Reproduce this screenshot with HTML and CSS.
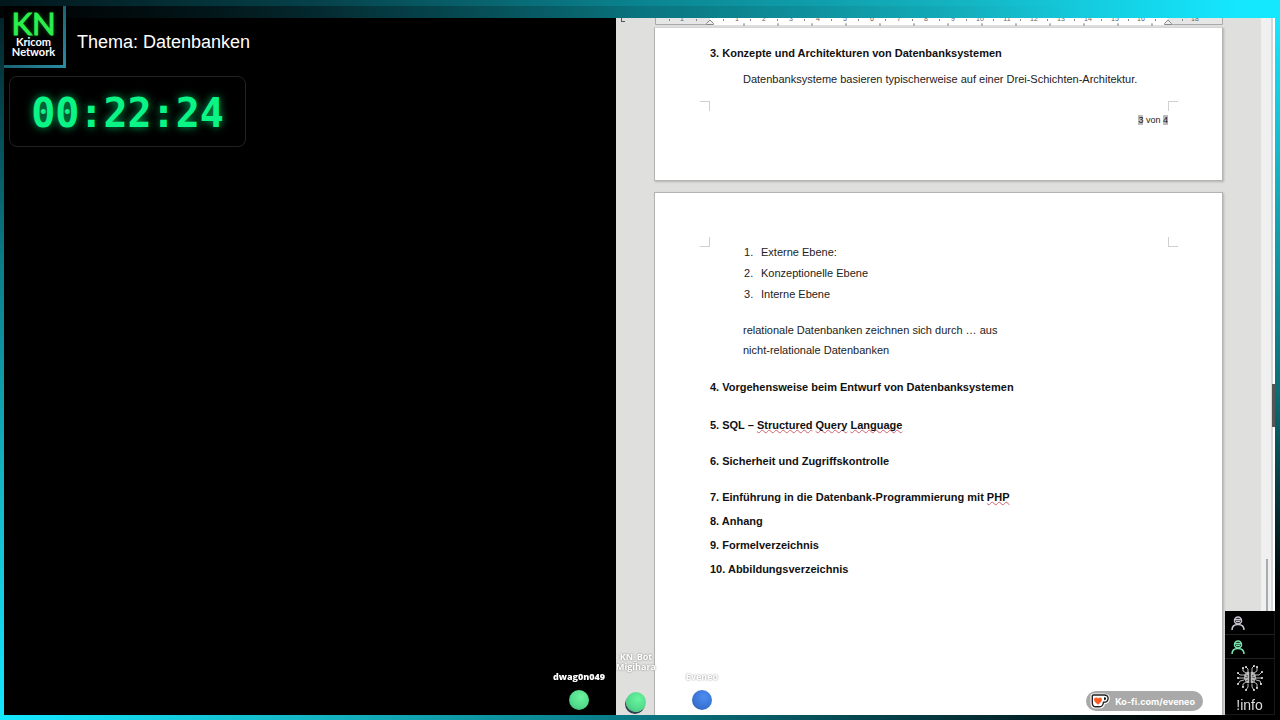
FILE: index.html
```
<!DOCTYPE html>
<html lang="de">
<head>
    <meta charset="UTF-8">
    <meta name="viewport" content="width=device-width, initial-scale=1.0">
    <title>Kricom Network</title>
    <link rel="stylesheet" href="styles.css">
</head>
<body>
    <div class="edge edge-top"></div>
    <div class="edge edge-left"></div>
    <main class="screen">
        <section class="stage">
            <header class="topic">
                <div class="logo">
                    <strong>KN</strong>
                    <span>Kricom</span>
                    <span>Network</span>
                </div>
                <h1>Thema: Datenbanken</h1>
            </header>
            <div class="timer">00:22:24</div>
        </section>

        <section class="writer">
            <div class="margin-left"><span class="tab-mark"></span></div>
            <div class="sheets">
                <!-- Lineal, 27px = 1cm -->
                <svg class="ruler" viewBox="0 0 568 9" width="568" height="9">
                    <defs>
                        <pattern id="half" x="41" width="27" height="9" patternUnits="userSpaceOnUse">
                            <rect x="0" y="1" width="1" height="2" fill="#888"/>
                        </pattern>
                        <pattern id="tabs" x="88" width="34" height="9" patternUnits="userSpaceOnUse">
                            <path d="M0 7h2M1 5v2" stroke="#999" fill="none"/>
                        </pattern>
                    </defs>
                    <rect width="568" height="7" fill="#e6e6e6"/>
                    <rect x="55" width="458" height="7" fill="#fff"/>
                    <rect x="14" width="540" height="5" fill="url(#half)"/>
                    <rect x="88" width="420" height="9" fill="url(#tabs)"/>
                    <path d="M.5 0v6.500H55M513 6.500h54.500V0" fill="none" stroke="#aaa"/>
                    <g class="ruler-numbers">
                        <text x="27" y="3">1</text>
                        <text x="82" y="3">1</text>
                        <text x="109" y="3">2</text>
                        <text x="136" y="3">3</text>
                        <text x="163" y="3">4</text>
                        <text x="190" y="3">5</text>
                        <text x="217" y="3">6</text>
                        <text x="244" y="3">7</text>
                        <text x="271" y="3">8</text>
                        <text x="298" y="3">9</text>
                        <text x="325" y="3">10</text>
                        <text x="352" y="3">11</text>
                        <text x="379" y="3">12</text>
                        <text x="406" y="3">13</text>
                        <text x="433" y="3">14</text>
                        <text x="460" y="3">15</text>
                        <text x="486" y="3">16</text>
                        <text x="540" y="3">18</text>
                    </g>
                    <path d="M51.500 6.500v-1l3.500-3.500 3.500 3.500v1zM509.500 6.500v-1l3.500-3.500 3.500 3.500v1z" fill="#eee" stroke="#888"/>
                </svg>
                <article class="page page-three">
                    <h3>3. Konzepte und Architekturen von Datenbanksystemen</h3>
                    <p>Datenbanksysteme basieren typischerweise auf einer Drei-Schichten-Architektur.</p>
                    <div class="marks marks-bottom"><i></i><i></i></div>
                    <div class="page-number"><span>3</span> von <span>4</span></div>
                </article>
                <article class="page page-four">
                    <div class="marks marks-top"><i></i><i></i></div>
                    <ol>
                        <li>Externe Ebene:</li>
                        <li>Konzeptionelle Ebene</li>
                        <li>Interne Ebene</li>
                    </ol>
                    <p>relationale Datenbanken zeichnen sich durch … aus</p>
                    <p>nicht-relationale Datenbanken</p>
                    <h3 class="chapter">4. Vorgehensweise beim Entwurf von Datenbanksystemen</h3>
                    <h3 class="spaced">5. SQL – <u>Structured</u> <u>Query</u> <u>Language</u></h3>
                    <h3 class="spaced">6. Sicherheit und Zugriffskontrolle</h3>
                    <h3>7. Einführung in die Datenbank-Programmierung mit <u>PHP</u></h3>
                    <h3>8. Anhang</h3>
                    <h3>9. Formelverzeichnis</h3>
                    <h3>10. Abbildungsverzeichnis</h3>
                </article>
            </div>
            <div class="scrollbar">
                <span class="thumb"></span>
                <span class="grip"></span>
            </div>
        </section>
    </main>
    <div class="edge edge-right"></div>
    <div class="edge edge-bottom"></div>

    <!-- Stream-Avatare -->
    <div class="viewer viewer-dwagon"><span>dwag0n049</span><i class="ball green"></i></div>
    <div class="viewer viewer-bot"><span>KN_Bot</span><span>Migihara</span><i class="ball green shaded"></i></div>
    <div class="viewer viewer-eveneo"><span>Eveneo</span><i class="ball blue"></i></div>

    <a class="kofi" href="https://ko-fi.com/eveneo">
        <svg viewBox="0 0 20 16" width="20" height="16">
            <path d="M3 1.500h11.500c3 0 4.500 2 4.300 4.300-.2 2.600-2 4-4.600 4.200-.5 2.800-2 4.500-4.500 4.500H5.500C3 14.500 1.500 12.500 1.500 10V3c0-1 .5-1.500 1.500-1.500z" fill="#fff" stroke="#fff" stroke-width="2"/>
            <path d="M3.300 2h11c2.600 0 4 1.600 3.800 3.700-.2 2.400-2 3.600-4.600 3.600-.3 3-1.500 4.500-4 4.500H5.800c-2.300 0-3.500-1.600-3.500-4V3c0-.7.300-1 1-1z" fill="#fff" stroke="#222" stroke-width="1.400"/>
            <path d="M14 4.200v3c1.300 0 2.100-.4 2.100-1.600 0-.9-.7-1.400-2.100-1.400z" fill="#222"/>
            <path d="M8 11.800C5.500 9.800 4 8.500 4 6.600c0-2.300 2.700-3 4-1.200 1.300-1.800 4-1.100 4 1.200 0 1.900-1.500 3.200-4 5.200z" fill="#ff5a24"/>
        </svg>
        Ko-fi.com/eveneo
    </a>

    <aside class="panel">
        <div class="panel-row">
            <svg class="person" viewBox="0 0 14 15" width="14" height="15">
                <circle cx="7" cy="4.500" r="3.500"/>
                <path d="M4 3.500h6M5 5.500h4M1 14c0-3.500 2.500-5.500 6-5.500s6 2 6 5.500"/>
            </svg>
        </div>
        <div class="panel-row">
            <svg class="person online" viewBox="0 0 14 15" width="14" height="15">
                <circle cx="7" cy="4.500" r="3.500"/>
                <path d="M4 3.500h6M5 5.500h4M1 14c0-3.500 2.500-5.500 6-5.500s6 2 6 5.500"/>
            </svg>
        </div>
        <div class="panel-info">
            <svg class="brain" viewBox="0 0 28 28" width="28" height="28">
                <path class="lobe" d="M13.300 8c-2-1-3.500.2-3.800 1.600-1.500.6-1.800 2-1.200 3.200-.8 1.600-.3 3 .8 3.700.2 2 2.200 3.300 4.200 2.500zM14.700 8c2-1 3.500.2 3.800 1.600 1.500.6 1.800 2 1.200 3.200.8 1.600.3 3-.8 3.700-.2 2-2.200 3.300-4.200 2.500z"/>
                <path class="fold" d="M10 11l2 1M9 14l3-1M10 17l2-1M18 11l-2 1M19 14l-3-1M18 17l-2-1"/>
                <path class="wire" d="M12 8V5l-2-2M16 8V4l2-2M10 9L7 7V4M18 9l3-2V3M8 11H4L2 9M20 11h3l3-3M8 14H2M20 14h6M8 16l-4 1-2 3M20 16l4 1 1 3M10 18l-3 2v3M18 18l3 2v4M12 20v3l-2 3M16 20v3l2 3"/>
                <g class="node">
                    <circle cx="10" cy="3" r="1"/><circle cx="18" cy="2" r="1"/>
                    <circle cx="7" cy="4" r="1"/><circle cx="21" cy="3" r="1"/>
                    <circle cx="2" cy="9" r="1"/><circle cx="26" cy="8" r="1"/>
                    <circle cx="2" cy="14" r="1"/><circle cx="26" cy="14" r="1"/>
                    <circle cx="2" cy="20" r="1"/><circle cx="25" cy="20" r="1"/>
                    <circle cx="7" cy="23" r="1"/><circle cx="21" cy="24" r="1"/>
                    <circle cx="10" cy="26" r="1"/><circle cx="18" cy="26" r="1"/>
                </g>
            </svg>
            <span>!info</span>
        </div>
    </aside>
</body>
</html>
```
FILE: styles.css
```
* {
    box-sizing: border-box;
}

body {
    margin: 0;
    height: 100vh;
    overflow: hidden;
    background: #000;
    color: #fff;
    font-family: "Liberation Sans", Arial, sans-serif;
    display: grid;
    grid-template-columns: 4px 1fr 5px;
    grid-template-rows: 18px 1fr 5px;
}

h1, h3, p, ol {
    margin: 0;
    padding: 0;
}

/* Rahmen */
.edge-top {
    grid-column: 1 / -1;
    background:
        linear-gradient(to right, rgba(0, 0, 0, 0.8) 5%, rgba(0, 0, 0, 0.3) 28%, rgba(0, 0, 0, 0.12) 50%, transparent 85%) bottom / 100% 12px no-repeat,
        linear-gradient(to right, #02161b, #06424b 25%, #0a8490 50%, #14b4c2 75%, #14e8ff 97%);
}

.edge-left {
    background: linear-gradient(to bottom, #02242a, #0a7c88 35%, #14bccb 70%, #14e8ff);
}

.edge-right {
    background: linear-gradient(to bottom, #14e8ff, #12a5b3 28%, #0a6a74 55%, #000 83%);
}

.edge-bottom {
    grid-column: 1 / -1;
    background: linear-gradient(to right, #14e8ff, #14b4c2 25%, #0a7c88 48%, #053f47 70%, #000 93%);
}

.screen {
    display: grid;
    grid-template-columns: 612fr 659fr;
    min-height: 0;
}

/* Linke Seite */
.topic {
    position: relative;
    height: 50px;
    padding-left: 73px;
}

.topic h1 {
    font-size: 18px;
    font-weight: normal;
    line-height: 48px;
}

.logo {
    position: absolute;
    top: -12px;
    left: 0;
    width: 62px;
    height: 62px;
    padding-top: 3px;
    background: #000;
    border-right: 3px solid;
    border-bottom: 3px solid;
    border-image: linear-gradient(135deg, #0b3a44, #2a8ca2) 1;
    display: flex;
    flex-direction: column;
    align-items: center;
    font-family: Lato, sans-serif;
    font-size: 11px;
    font-weight: bold;
    line-height: 10px;
}

.logo strong {
    color: #2bf04c;
    font-size: 31px;
    font-weight: normal;
    line-height: 28px;
    -webkit-text-stroke: 1px #2bf04c;
    text-shadow: 0 0 5px rgba(30, 240, 70, 0.5);
}

.timer {
    width: 237px;
    height: 71px;
    margin: 8px 5px;
    border: 1px solid #222;
    border-radius: 8px;
    font-family: "DejaVu Sans Mono", monospace;
    font-size: 40px;
    font-weight: bold;
    line-height: 72px;
    text-align: center;
    color: #0bf587;
    text-shadow: 0 0 8px rgba(0, 245, 130, 0.7);
}

/* Textdokument */
.writer {
    background: #dfdfdd;
    color: #222;
    display: flex;
    min-height: 0;
    overflow: hidden;
}

.margin-left {
    width: 38px;
    padding: 0 5px;
}

.tab-mark {
    display: block;
    width: 4px;
    height: 4px;
    border-left: 1px solid #555;
    border-bottom: 1px solid #555;
}

.sheets {
    flex: 1;
    margin-right: 38px;
    display: flex;
    flex-direction: column;
}

.ruler {
    margin-left: 1px;
    flex: none;
}

.ruler-numbers {
    font-size: 7px;
    fill: #666;
    text-anchor: middle;
}

.page {
    background: #fff;
    border: 1px solid #b4b4b4;
    box-shadow: 1px 1px 2px rgba(0, 0, 0, 0.2);
    padding: 0 54px 0 55px;
    font-size: 11px;
}

.page-three {
    height: 154px;
    padding-top: 13px;
    border-top-color: #d5d5d5;
    margin-bottom: 11px;
    flex: none;
}

.page-four {
    flex: 1;
    padding-top: 44px;
    border-bottom: none;
}

.page h3 {
    font-size: 11px;
    line-height: 24px;
    color: #111;
}

.page p {
    padding-left: 33px;
    line-height: 20px;
}

.page-three p {
    margin-top: 4px;
}

.page ol {
    margin-bottom: 15px;
    padding-left: 51px;
    line-height: 21px;
    list-style: none;
}

.page li {
    counter-increment: level;
}

.page li::before {
    content: counter(level) ".";
    display: inline-block;
    width: 17px;
    margin-left: -17px;
}

.page .chapter {
    margin: 15px 0 14px;
}

.page .spaced {
    margin-bottom: 12px;
}

.page u {
    text-decoration: underline wavy #d06070 1px;
    text-decoration-skip-ink: none;
    text-underline-offset: 0;
}

.marks {
    display: flex;
    justify-content: space-between;
    margin: 0 -10px;
}

.marks i {
    width: 10px;
    height: 10px;
    border: 0 solid #d0d0d0;
}

.marks i:first-child {
    border-right-width: 1px;
}

.marks i:last-child {
    border-left-width: 1px;
}

.marks-bottom {
    margin-top: 12px;
}

.marks-bottom i {
    border-top-width: 1px;
}

.marks-top {
    margin-bottom: -5px;
}

.marks-top i {
    border-bottom-width: 1px;
}

.page-number {
    margin-top: 3px;
    font-size: 9px;
    line-height: 12px;
    text-align: right;
}

.page-number span {
    background: #bbb;
}

.scrollbar {
    position: relative;
    width: 14px;
    background: #f0f0f0;
    border-right: 2px solid #fff;
    box-shadow: inset -2px 0 #d5d8da;
}

.thumb {
    position: absolute;
    top: 541px;
    bottom: 0;
    left: 5px;
    width: 2px;
    background: #a8abab;
}

.grip {
    position: absolute;
    top: 366px;
    right: -2px;
    width: 3px;
    height: 43px;
    background: #555;
}

/* Overlays */
.viewer {
    position: fixed;
    bottom: 10px;
    width: 60px;
    display: flex;
    flex-direction: column;
    align-items: center;
    font-family: "Open Sans", sans-serif;
    font-size: 9px;
    font-weight: 700;
    line-height: 10px;
    text-shadow: 0 0 2px rgba(0, 0, 0, 0.5);
}

.viewer-dwagon {
    left: 549px;
    font-weight: 800;
}

.viewer-bot {
    left: 606px;
    bottom: 8px;
}

.viewer-eveneo {
    left: 672px;
}

.ball {
    width: 20px;
    height: 20px;
    margin-top: 8px;
    border-radius: 50%;
}

.green {
    background: radial-gradient(circle at 60% 35%, #6bf5a0, #4fd98a 60%, #3aa56c);
}

.blue {
    background: radial-gradient(circle at 60% 35%, #4d8df0, #3973d3 60%, #2a579f);
}

.shaded {
    margin-top: 20px;
    box-shadow: -1px 2px 0 #2a4050;
}

.kofi {
    position: fixed;
    right: 77px;
    bottom: 9px;
    height: 20px;
    padding: 0 8px 0 4px;
    border-radius: 10px;
    background: #a9a9a9;
    color: #fff;
    display: flex;
    align-items: center;
    gap: 5px;
    font-family: Inter, sans-serif;
    font-size: 9px;
    font-weight: bold;
    text-decoration: none;
}

.panel {
    position: fixed;
    right: 5px;
    bottom: 5px;
    width: 50px;
    background: #000;
    border-right: 1px solid #181818;
    border-bottom: 1px solid #181818;
}

.panel-row {
    height: 24px;
    padding: 5px 6px;
    border-bottom: 1px solid #222;
}

.person {
    display: block;
    fill: none;
    stroke: #c9c4d2;
    stroke-width: 1.5;
}

.person.online {
    stroke: #7be5b0;
}

.panel-info {
    height: 55px;
    padding-top: 5px;
    display: flex;
    flex-direction: column;
    align-items: center;
    font-size: 14px;
    line-height: 26px;
    color: #ddd;
}

.brain {
    flex: none;
}

.lobe {
    fill: #bbb;
}

.fold {
    stroke: #555;
}

.wire {
    fill: none;
    stroke: #bbb;
}

.node {
    fill: #eee;
}
```
